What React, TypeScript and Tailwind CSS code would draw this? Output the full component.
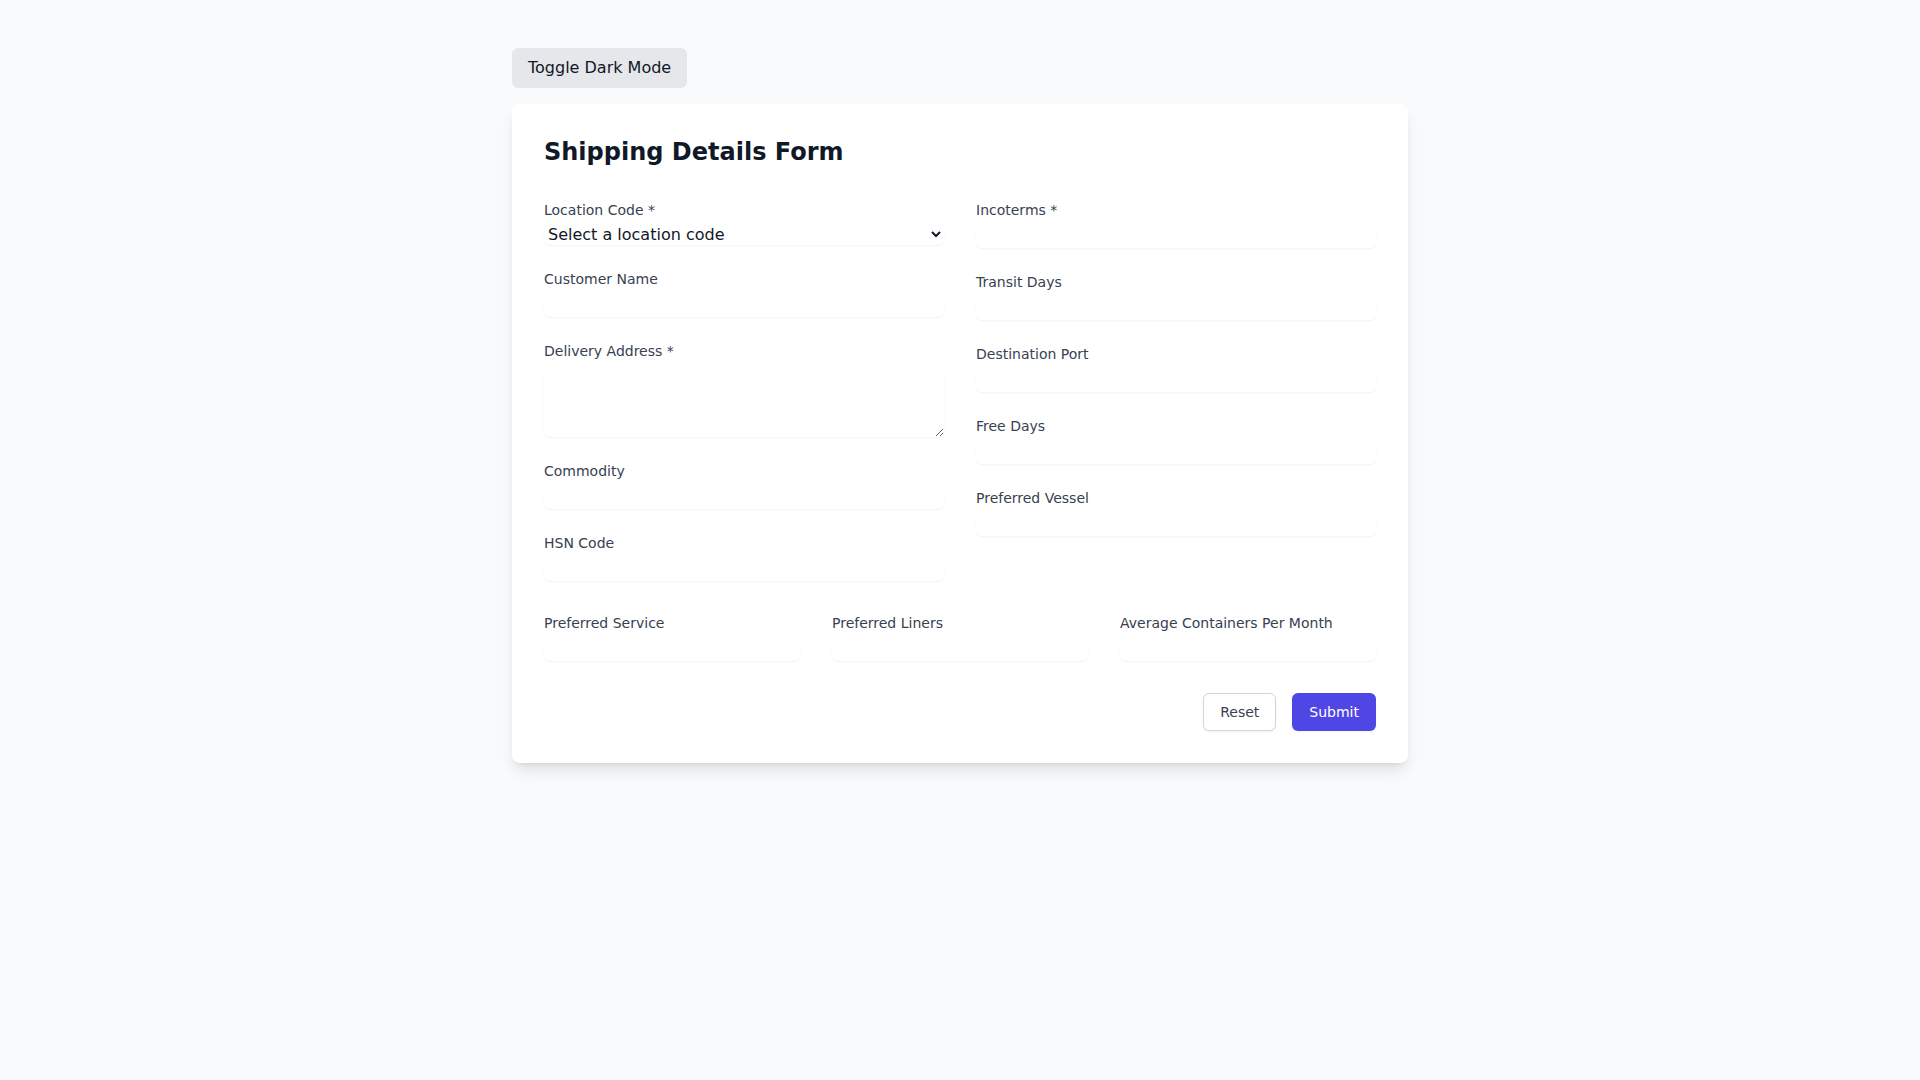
import React from "react";

const inputClass = "mt-1 block w-full rounded-md shadow-[0_1px_2px_0_rgba(0,0,0,0.05)]";

function Field({ label, id, textarea }: { label: string; id: string; textarea?: boolean }) {
  return (
    <div>
      <label htmlFor={id} className="block text-sm text-[#374151]">
        {label}
      </label>
      {textarea ? (
        <textarea id={id} rows={3} className={inputClass} />
      ) : (
        <input id={id} type="text" className={inputClass} />
      )}
    </div>
  );
}

export default function App() {
  return (
    <div className="min-h-screen bg-[#f9fafb] font-['DejaVu_Sans',sans-serif] text-[#111827]">
      <div className="max-w-4xl mx-auto py-12">
        <button className="mb-4 px-4 py-2 rounded-md bg-[#e5e7eb] text-[#111827]">
          Toggle Dark Mode
        </button>
        <div className="bg-white rounded-lg shadow-lg p-8">
          <h1 className="text-2xl font-bold text-[#111827] mb-8">Shipping Details Form</h1>
          <form className="space-y-8" onSubmit={(e) => e.preventDefault()}>
            <div className="grid grid-cols-2 gap-8">
              <div className="space-y-6">
                <div>
                  <label htmlFor="locationCode" className="block text-sm text-[#374151]">
                    Location Code *
                  </label>
                  <select id="locationCode" className={inputClass} defaultValue="">
                    <option value="">Select a location code</option>
                    <option value="INNSA">INNSA</option>
                    <option value="INMUN">INMUN</option>
                  </select>
                </div>
                <Field label="Customer Name" id="customerName" />
                <Field label="Delivery Address *" id="deliveryAddress" textarea />
                <Field label="Commodity" id="commodity" />
                <Field label="HSN Code" id="hsnCode" />
              </div>
              <div className="space-y-6">
                <Field label="Incoterms *" id="incoterms" />
                <Field label="Transit Days" id="transitDays" />
                <Field label="Destination Port" id="destinationPort" />
                <Field label="Free Days" id="freeDays" />
                <Field label="Preferred Vessel" id="preferredVessel" />
              </div>
            </div>
            <div className="grid grid-cols-3 gap-8">
              <Field label="Preferred Service" id="preferredService" />
              <Field label="Preferred Liners" id="preferredLiners" />
              <Field label="Average Containers Per Month" id="avgContainers" />
            </div>
            <div className="flex justify-end gap-4">
              <button
                type="button"
                className="px-4 py-2 text-sm rounded-md border border-[#d1d5db] bg-white text-[#374151] shadow-[0_1px_2px_0_rgba(0,0,0,0.05)]"
              >
                Reset
              </button>
              <button
                type="submit"
                className="px-4 py-2 text-sm rounded-md border border-transparent bg-[#4f46e5] text-white shadow-[0_1px_2px_0_rgba(0,0,0,0.05)]"
              >
                Submit
              </button>
            </div>
          </form>
        </div>
      </div>
    </div>
  );
}
